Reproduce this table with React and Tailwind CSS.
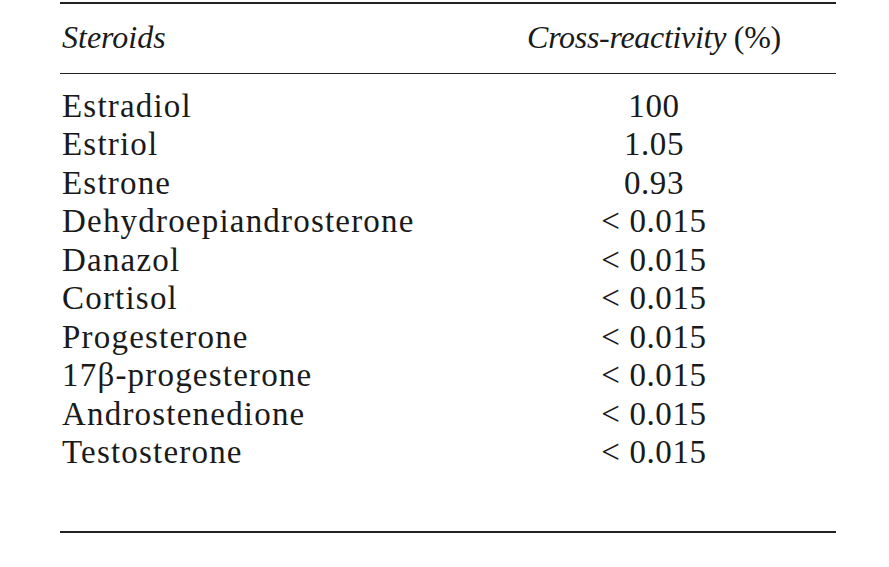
const rows = [
  ["Estradiol", "100"],
  ["Estriol", "1.05"],
  ["Estrone", "0.93"],
  ["Dehydroepiandrosterone", "< 0.015"],
  ["Danazol", "< 0.015"],
  ["Cortisol", "< 0.015"],
  ["Progesterone", "< 0.015"],
  ["17β-progesterone", "< 0.015"],
  ["Androstenedione", "< 0.015"],
  ["Testosterone", "< 0.015"],
];

export default function App() {
  return (
    <div className="h-[567px] w-[889px] bg-white pt-[2px] pl-[60px] font-['Liberation_Serif',serif] text-[#1a1a1a]">
      <div className="w-[776px]">
        <div className="flex h-[72px] items-center border-t-2 border-b-[1.5px] border-[#222] pb-[3px] text-[32px]">
          <div className="w-[412px] pl-[2px] italic">Steroids</div>
          <div className="flex-1 text-center tracking-[-0.3px]">
            <span className="italic">Cross-reactivity</span> (%)
          </div>
        </div>
        <div className="pt-[13px] pb-[59px] border-b-2 border-[#222]">
          {rows.map(([name, value]) => (
            <div key={name} className="flex h-[38.5px] items-center text-[33px] leading-none">
              <div className="w-[412px] pl-[2px] tracking-[1.2px]">{name}</div>
              <div className="flex-1 text-center tracking-[0.6px]">{value}</div>
            </div>
          ))}
        </div>
      </div>
    </div>
  );
}
